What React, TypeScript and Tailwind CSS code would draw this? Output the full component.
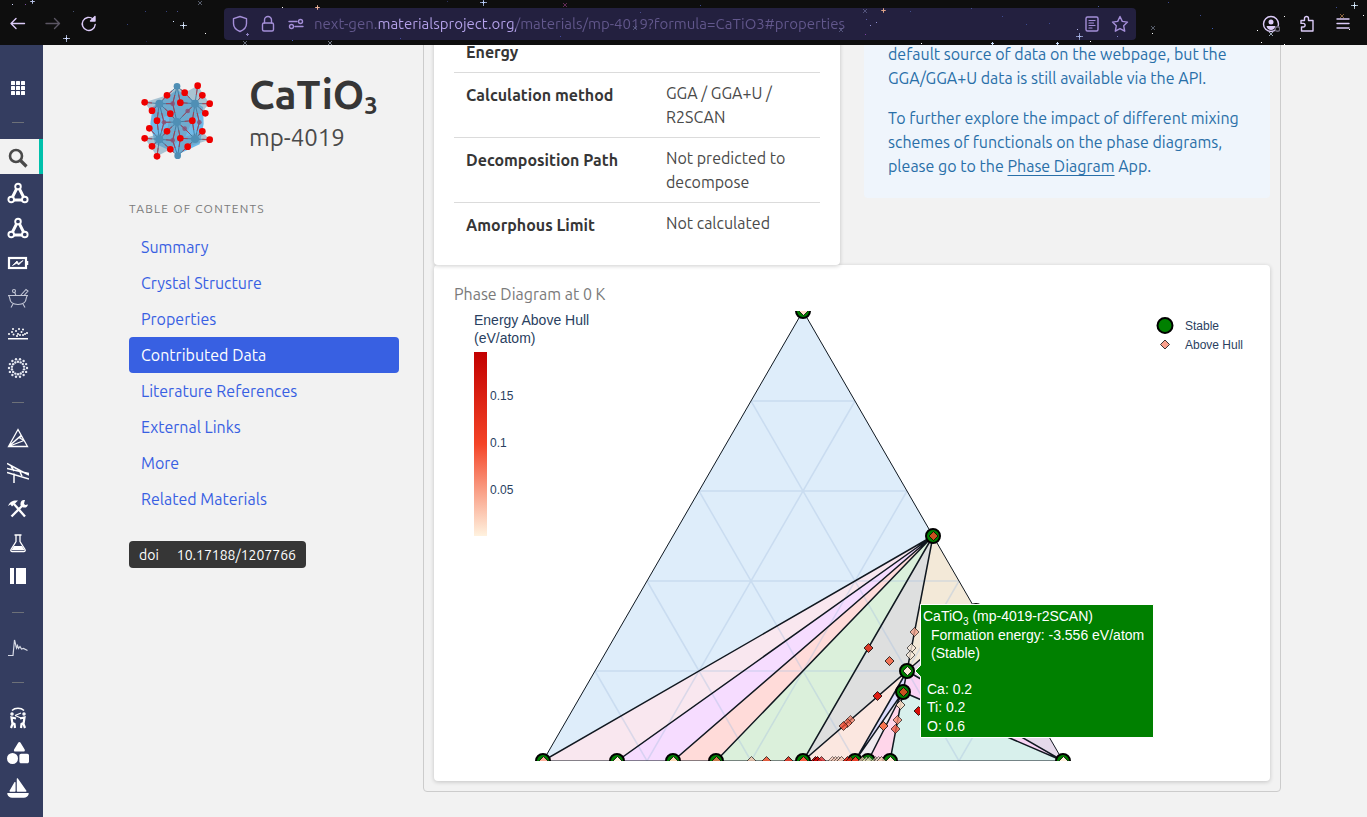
import React from "react";
import { FaShapes, FaSailboat } from "react-icons/fa6";

type Pt = [number, number];

/* ---------- browser toolbar ---------- */

const dots: [number, number, string][] = [
  [12, 4, "#cfd6ff"], [25, 4, "#7c4fa0"], [73, 11, "#44506e"], [127, 24, "#34407a"], [145, 11, "#34407a"],
  [166, 11, "#34407a"], [173, 21, "#d8e8ff"], [177, 11, "#4a4f90"], [205, 33, "#ffffff"], [146, 41, "#20204a"],
  [247, 34, "#5a4a90"], [282, 7, "#ffffff"], [292, 40, "#4a60c0"], [447, 1, "#2a3060"], [700, 5, "#3c4a90"],
  [866, 19, "#5a5aa0"], [876, 22, "#8f8fd0"], [870, 25, "#8f8fd0"], [865, 34, "#7c3fa0"], [910, 11, "#44508e"],
  [971, 8, "#44508e"], [1002, 16, "#3c4a90"], [1026, 24, "#3c4a90"], [1049, 23, "#3c4a90"], [1098, 6, "#4a5aa0"],
  [1090, 41, "#ffffff"], [1077, 29, "#b0b0e0"], [1117, 36, "#8080c0"], [1152, 33, "#ffffff"], [1168, 2, "#3c4a90"],
  [1200, 15, "#3c4a90"], [1212, 28, "#3c5ab0"], [1257, 30, "#ffffff"], [1261, 42, "#ffffff"], [1284, 16, "#ffffff"],
  [1284, 44, "#ffffff"], [1300, 38, "#ffffff"], [1336, 7, "#3c4a90"], [1349, 29, "#ffffff"], [1363, 15, "#ffffff"],
  [921, 43, "#ffffff"], [400, 38, "#4048a0"], [560, 36, "#4048a0"], [640, 12, "#4a4f90"],
];
const pluses: [number, number, number, string][] = [
  [66, 38, 3, "#d0dcff"], [183, 25, 3, "#d8e8ff"], [317, 7, 2, "#f0b59a"], [483, 2, 3, "#b8ccf8"],
  [883, 10, 2, "#e0a58a"], [1079, 36, 3, "#a8b4e8"], [1354, 5, 3, "#d8ecff"], [32, 1, 2, "#b8c4e8"],
  [992, 43, 1, "#c8dcf8"], [1057, 43, 1, "#c8dcf8"], [247, 34, 1, "#8c80c0"],
];
const crosses: [number, number, string][] = [
  [200, 3, "#7a8498"], [245, 43, "#8a94a8"], [330, 43, "#aab4c8"], [865, 11, "#6a6c98"], [1153, 28, "#7a8498"],
  [1342, 16, "#c08850"], [1271, 34, "#d8ecff"], [841, 30, "#6a6c98"], [565, 5, "#8a3878"], [635, 28, "#6a6c98"],
];

function Stars() {
  return (
    <svg className="pointer-events-none absolute left-0 top-0" width="1367" height="45" aria-hidden="true">
      {dots.map(([x, y, c], i) => (
        <rect key={i} x={x} y={y} width="1" height="1" fill={c} />
      ))}
      {pluses.map(([x, y, r, c], i) => (
        <g key={i}>
          <path d={`M${x - r} ${y + 0.5}h${2 * r + 1}M${x + 0.5} ${y - r}v${2 * r + 1}`} stroke={c} opacity="0.75" />
          <path d={`M${x - 1} ${y + 0.5}h3M${x + 0.5} ${y - 1}v3`} stroke={c} />
        </g>
      ))}
      {crosses.map(([x, y, c], i) => (
        <path key={i} d={`M${x - 2} ${y - 2}l4 4m0 -4l-4 4`} stroke={c} strokeWidth="0.8" opacity="0.85" />
      ))}
    </svg>
  );
}

function BarButton({ label, width, children }: { label: string; width: string; children: React.ReactNode }) {
  return (
    <button type="button" aria-label={label} className={`flex h-8 items-center justify-center ${width}`}>
      <svg
        width="18"
        height="18"
        viewBox="0 0 18 18"
        fill="none"
        stroke="currentColor"
        strokeWidth="1.4"
        strokeLinecap="round"
        strokeLinejoin="round"
      >
        {children}
      </svg>
    </button>
  );
}

function Toolbar() {
  return (
    <header className="relative flex h-[45px] shrink-0 items-center bg-[#0e0e0e] pb-px pt-1 text-[#dccbf8]">
      <nav className="flex w-56 shrink-0" aria-label="History">
        <BarButton label="Back" width="w-[35px]">
          <path d="M15.500 8.500H2M7 3.500l-5 5 5 5" />
        </BarButton>
        <span className="flex text-[#5b5663]">
          <BarButton label="Forward" width="w-9">
            <path d="M2 8.500h13.500M10.500 3.500l5 5-5 5" />
          </BarButton>
        </span>
        <BarButton label="Reload" width="w-9">
          <path d="M15.200 9.500A6.500 6.500 0 1 1 13 4" />
          <path d="M15 1.500v4.500h-4.500z" fill="currentColor" />
        </BarButton>
      </nav>
      <div className="flex h-8 min-w-0 flex-1 items-center rounded bg-[#23203f] px-0.5 text-[#a48ed8]">
        <BarButton label="Tracking protection" width="w-7">
          <path d="M9 1.500l6.500 2.200v4.800c0 3.500-2.800 6.500-6.500 8-3.700-1.500-6.500-4.500-6.500-8V3.700z" />
        </BarButton>
        <BarButton label="Site information" width="w-7">
          <rect x="3.500" y="8" width="11" height="8" rx="1.500" />
          <path d="M5.500 8V5a3.500 3.500 0 0 1 7 0v3" />
        </BarButton>
        <BarButton label="Permissions" width="w-7">
          <path d="M2 6.500h8M8 11.500h8" />
          <circle cx="13.500" cy="6.500" r="2" />
          <circle cx="4.500" cy="11.500" r="2" />
        </BarButton>
        <input
          aria-label="Address"
          defaultValue="next-gen.materialsproject.org/materials/mp-4019?formula=CaTiO3#properties"
          className="ml-1 min-w-0 flex-1 bg-[linear-gradient(90deg,#62578c_64px,#b6a3ec_64px,#b6a3ec_202px,#62578c_202px)] bg-clip-text text-[15px] leading-6 text-transparent outline-none"
        />
        <BarButton label="Reader view" width="w-7">
          <rect x="3" y="2" width="12" height="14" rx="1.500" />
          <path d="M6 5.500h6M6 8h4.500M6 10.500h6M6 13h3" strokeWidth="1.200" />
        </BarButton>
        <BarButton label="Bookmark" width="w-7">
          <path d="M9 1.500l2.300 4.900 5.200.7-3.800 3.700 1 5.400L9 13.600l-4.700 2.600 1-5.400L1.500 7.100l5.200-.7z" />
        </BarButton>
      </div>
      <div className="flex w-[231px] shrink-0 justify-end pr-1.5">
        <BarButton label="Account" width="w-9">
          <circle cx="9" cy="9" r="7.500" />
          <circle cx="9" cy="7" r="2.500" fill="currentColor" stroke="none" />
          <path d="M4.500 11h9c-.5 2.500-2.500 4-4.500 4s-4-1.500-4.500-4z" fill="currentColor" stroke="none" />
          <circle cx="15.500" cy="14" r="2.300" stroke="#6d6879" fill="#0e0e0e" />
        </BarButton>
        <BarButton label="Extensions" width="w-9">
          <path d="M3 5.500h3.500V3.500a2 2 0 0 1 4 0v2H15V16H3.500v-4h1.800a1.800 1.800 0 0 0 0-3.600H3z" />
        </BarButton>
        <BarButton label="Menu" width="w-9">
          <path d="M3 4h12M3 8.500h12M3 13h12" />
        </BarButton>
      </div>
      <Stars />
    </header>
  );
}

/* ---------- application rail ---------- */

const svgProps = {
  width: 22,
  height: 22,
  viewBox: "0 0 22 22",
  fill: "none",
  stroke: "currentColor",
  strokeWidth: 1.5,
} as const;

const MoleculeIcon = () => (
  <svg {...svgProps} strokeWidth="1.900">
    <path d="M10 6L5 16M12 6l5 10M7 18h8" strokeWidth="2.900" />
    <circle cx="11" cy="4.500" r="2.800" fill="#343d60" />
    <circle cx="4.200" cy="17.500" r="2.800" fill="#343d60" />
    <circle cx="17.800" cy="17.500" r="2.800" fill="#343d60" />
  </svg>
);

const ringDots: Pt[] = [];
for (let i = 0; i < 14; i++) {
  const a = (i / 14) * Math.PI * 2;
  ringDots.push([11 + Math.cos(a) * 9, 11 + Math.sin(a) * 9], [11 + Math.cos(a + 0.22) * 6.2, 11 + Math.sin(a + 0.22) * 6.2]);
}

const railItems: { label: string; icon: React.ReactNode }[] = [
  {
    label: "Apps",
    icon: (
      <svg {...svgProps} fill="currentColor" stroke="none">
        {[4, 9, 14].map((y) => [4, 9, 14].map((x) => <rect key={`${x}-${y}`} x={x} y={y} width="4" height="4" rx="0.500" />))}
      </svg>
    ),
  },
  { label: "-", icon: null },
  {
    label: "Materials Explorer",
    icon: (
      <svg {...svgProps} strokeWidth="2.600" className="text-[#4a4a4a]">
        <circle cx="9" cy="9" r="6" />
        <path d="M13.500 13.500l6 6" strokeWidth="3.200" />
      </svg>
    ),
  },
  { label: "Molecules Explorer", icon: <MoleculeIcon /> },
  { label: "MOF Explorer", icon: <MoleculeIcon /> },
  {
    label: "Battery Explorer",
    icon: (
      <svg {...svgProps}>
        <rect x="2" y="6" width="17" height="10" strokeWidth="2.200" />
        <path d="M20.500 9v4" />
        <path d="M5.500 13.500l4.500-4.500 1.500 2.500L16 8.500l-4.500 4.500L10 11z" fill="currentColor" strokeWidth="0.800" />
      </svg>
    ),
  },
  {
    label: "Synthesis Explorer",
    icon: (
      <svg {...svgProps} strokeWidth="1.100" stroke="#c3c7d6">
        <path d="M1 8.500h20c-1 0-1.500 1-1.700 2.500C19 15 16 17.500 11 17.500S3 15 2.700 11C2.500 9.500 2 8.500 1 8.500zM6 17l-2 3.500M16 17l2 3.500M13.500 8.500l5.500-6 2 1.500-4 4.500M9 8.500L7.500 5" />
        <circle cx="7" cy="4" r="1.500" />
      </svg>
    ),
  },
  {
    label: "Catalysis Explorer",
    icon: (
      <svg {...svgProps} fill="currentColor" stroke="none">
        <path d="M1 16h20v1.500H1z" />
        {([[5, 10], [2, 12], [6.500, 12.500], [9, 9], [11, 12], [13, 13], [14.500, 10], [12, 7], [16, 7.500], [18, 12], [20, 11], [6, 7], [16, 13], [10, 14]] as Pt[]).map(([x, y]) => (
          <circle key={`${x}-${y}`} cx={x} cy={y} r="1" />
        ))}
      </svg>
    ),
  },
  {
    label: "Crystal Toolkit",
    icon: (
      <svg {...svgProps} fill="#e6e9f2" stroke="none">
        {ringDots.map(([x, y], i) => (
          <circle key={i} cx={x} cy={y} r="1.200" />
        ))}
      </svg>
    ),
  },
  { label: "-", icon: null },
  {
    label: "Phase Diagram",
    icon: (
      <svg {...svgProps} strokeWidth="1.300">
        <path d="M11 2.500l9.500 17h-19zM1.500 19.500L12 10.500l3-1M1.500 19.500l15.500-6M1.500 19.500L14 8.500M12 10.500l5 3" />
      </svg>
    ),
  },
  {
    label: "Pourbaix Diagram",
    icon: (
      <svg {...svgProps} strokeWidth="1.500">
        <path d="M0 1.500l14 7.500 8 4M0 6.500l22 5M0 10.500l22 6.500M7 11.500V21M4 4l3 5M12 8l3 6" />
      </svg>
    ),
  },
  {
    label: "Tools",
    icon: (
      <svg {...svgProps} strokeLinecap="butt">
        <path d="M7 7l11 12.500" strokeWidth="2.300" />
        <path d="M1 9C3 4.500 6 3 11 3.500L7.500 7 5 9.500l-1.500-2z" fill="currentColor" stroke="none" />
        <path d="M4.500 19.500L15.500 8.500" strokeWidth="2.300" />
        <path d="M18 3a3.800 3.800 0 1 0 3 4.500l-3 .5-1-1.500z" fill="currentColor" stroke="none" />
      </svg>
    ),
  },
  {
    label: "Reaction Calculator",
    icon: (
      <svg {...svgProps}>
        <path d="M7.500 3h7M9 3v6.500L4 17.500c-.6 1.200 0 2 1.200 2h11.600c1.200 0 1.800-.8 1.200-2l-5-8V3" strokeWidth="1.300" />
        <path d="M7 14h8l2.500 4H4.500z" fill="currentColor" stroke="none" />
      </svg>
    ),
  },
  {
    label: "Interface Reactions",
    icon: (
      <svg {...svgProps} fill="currentColor" stroke="none">
        <path d="M3 1h4v16H3zM9 1h10v16H9z" />
      </svg>
    ),
  },
  { label: "-", icon: null },
  {
    label: "Spectroscopy",
    icon: (
      <svg {...svgProps} strokeWidth="1.200" stroke="#d8dbe6">
        <path d="M1 18.500h5L7.500 3l2 8 1-2.500 1 3 1.500-2 1.500 2.500 2-.5 4 2" />
      </svg>
    ),
  },
  { label: "-", icon: null },
  {
    label: "Community",
    icon: (
      <svg {...svgProps}>
        <path d="M5 3.500c3-3 9-3 12 0" />
        <path d="M4 21l1.500-4L4.500 10.500l4.500 1M8 21l-.5-4-2-1M18 21l-1.500-4 1-6.500-4.500 1M14 21l.5-4 2-1" strokeWidth="2.200" />
        <path d="M8 8.500l6-2.500M8 8.500l6 2.500" strokeWidth="1.200" />
        <circle cx="5" cy="7" r="1" />
        <circle cx="17" cy="7" r="1" />
      </svg>
    ),
  },
  { label: "Contributions", icon: <FaShapes size={22} /> },
  { label: "Harbor", icon: <FaSailboat size={22} /> },
];

function Rail() {
  return (
    <nav className="w-[43px] shrink-0 bg-[#343d60] pt-6 text-white" aria-label="Applications">
      {railItems.map((item, i) =>
        item.icon === null ? (
          <div key={i} className="flex h-[35px] items-center pl-3 pt-px">
            <hr className="w-3 border-0 border-t border-[#6c7078]" />
          </div>
        ) : (
          <a
            key={i}
            href="#apps"
            aria-label={item.label}
            className={
              item.label === "Materials Explorer"
                ? "flex h-[35px] items-center border-r-4 border-[#00c0ab] bg-[#f2f2f2] pl-[7px] pt-0.5"
                : "flex h-[35px] items-center pl-[7px] pt-0.5"
            }
          >
            {item.icon}
          </a>
        ),
      )}
    </nav>
  );
}

/* ---------- material summary column ---------- */

const reds: Pt[] = [
  [232, 76], [73, 126], [140, 105], [193, 97], [246, 105], [268, 130], [180, 127], [95, 151], [150, 160], [255, 159],
  [110, 181], [216, 181], [87, 204], [246, 213], [140, 213], [180, 234], [73, 234], [268, 238], [95, 258], [150, 267],
  [202, 259], [110, 288],
];
const dimReds: Pt[] = [[202, 152], [193, 205], [157, 130], [157, 240], [237, 186], [131, 186]];
const blues: Pt[] = [[170, 78], [117, 130], [224, 130], [170, 185], [117, 237], [224, 236], [172, 286]];

function Crystal() {
  const bonds: [Pt, Pt][] = [];
  blues.forEach((b) =>
    [...reds, ...dimReds].forEach((r) => {
      if (Math.hypot(b[0] - r[0], b[1] - r[1]) < 58) bonds.push([b, r]);
    }),
  );
  return (
    <svg width="74" height="80" viewBox="62 62 222 240" role="img" aria-label="Crystal structure" className="mt-1.5 shrink-0">
      <path d="M97 140L170 88l78 52 2 50-12 62-64 30-70-32-14-60z" fill="#62b4e8" opacity="0.900" />
      <g fill="#6f9db8" opacity="0.550">
        <path d="M73 126l67-21 40 22-30 33-40 21z" />
        <path d="M170 78l23 19 39-21 14 29 9 54-53 0-62-54z" />
        <path d="M232 76l36 54-52 51-36-54z" />
        <path d="M73 234l67-21 40 21-30 33-40 21z" />
        <path d="M180 234l66-21 22 25-66 21-30 27z" />
        <path d="M140 213l10-53 66 21-23 53z" />
        <path d="M150 160l30-33 36 54-36 53-40-21z" />
      </g>
      <g strokeWidth="3">
        {bonds.map(([b, r], i) => (
          <g key={i} opacity="0.850">
            <path d={`M${b[0]} ${b[1]}L${r[0]} ${r[1]}`} stroke="#3c7499" />
            <path d={`M${(b[0] + r[0]) / 2} ${(b[1] + r[1]) / 2}L${r[0]} ${r[1]}`} stroke="#b02c3c" />
          </g>
        ))}
      </g>
      {dimReds.map(([x, y], i) => (
        <circle key={i} cx={x} cy={y} r="7" fill="#8c4c70" opacity="0.800" />
      ))}
      {blues.map(([x, y], i) => (
        <circle key={i} cx={x} cy={y} r={i === 0 || i === 6 ? 10 : 12} fill="#4f8fb5" />
      ))}
      {reds.map(([x, y], i) => (
        <circle key={i} cx={x} cy={y} r="10" fill="#ee0000" />
      ))}
    </svg>
  );
}

const contents = [
  "Summary",
  "Crystal Structure",
  "Properties",
  "Contributed Data",
  "Literature References",
  "External Links",
  "More",
  "Related Materials",
];

function Summary() {
  return (
    <aside className="w-[270px] shrink-0 pt-[30px]">
      <div className="flex items-start gap-[34px] pl-3">
        <Crystal />
        <div>
          <h1 className="text-[40px] font-semibold leading-10 text-[#363636]">
            CaTiO<sub className="bottom-[-5px] text-2xl leading-none">3</sub>
          </h1>
          <p className="mt-[5px] text-2xl leading-9 text-[#4a4a4a]">mp-4019</p>
        </div>
      </div>
      <nav className="mt-10" aria-label="Table of contents">
        <p className="mb-3 text-xs uppercase leading-4 tracking-widest text-[#7a7a7a]">Table of Contents</p>
        <ul>
          {contents.map((name) => (
            <li key={name}>
              <a
                href="#properties"
                className={
                  name === "Contributed Data"
                    ? "block rounded bg-[#3860e2] px-3 py-1.5 leading-6 text-white"
                    : "block rounded px-3 py-1.5 leading-6 text-[#3860e2]"
                }
              >
                {name}
              </a>
            </li>
          ))}
        </ul>
      </nav>
      <a href="#doi" className="mt-6 inline-flex h-[27px] items-center gap-[18px] rounded bg-[#363636] px-2.5 pt-px text-sm text-white">
        <span>doi</span>
        <span>10.17188/1207766</span>
      </a>
    </aside>
  );
}

/* ---------- phase diagram ---------- */

const regions: [string, string][] = [
  ["803,311 543,761 933,536", "#deedfa"],
  ["543,761 617,761 933,536", "#f9e7ef"],
  ["617,761 673,761 933,536", "#f6dcff"],
  ["673,761 716,761 933,536", "#ffdbd9"],
  ["716,761 803,761 933,536", "#dbf0db"],
  ["803,761 907,671 933,536", "#dedfdf"],
  ["933,536 907,671 976,611", "#f3e9d8"],
  ["803,761 855,761 907,671", "#fbe7e0"],
  ["855,761 903,692 907,671", "#dcdcfc"],
  ["855,761 868,761 903,692", "#efebef"],
  ["868,761 890,761 903,692", "#ffd6ea"],
  ["890,761 1063,761 903,692", "#d8f0ec"],
  ["903,692 907,671 1063,761", "#fad4f5"],
  ["907,671 976,611 1063,761", "#e5d9ea"],
];
const gridLines =
  "M751 401H855M699 491H907M647 581H959M595 671H1011M751 401L959 761M699 491L855 761M647 581L751 761M595 671L647 761M855 401L647 761M907 491L751 761M959 581L855 761M1011 671L959 761";
const stable: Pt[] = [
  [803, 311], [933, 536], [976, 611], [907, 671], [903, 692], [543, 761], [617, 761], [673, 761], [716, 761],
  [803, 761], [855, 761], [868, 761], [890, 761], [1063, 761],
];
const entries: [number, number, string, number][] = [
  [803, 311, "#fde0cc", 1], [933, 536, "#c9501f", 1], [907, 671, "#fde8da", 1], [903, 692, "#c8521f", 1],
  [914, 632, "#f0a08a", 0.8], [911, 648, "#f8e8d8", 0.8], [910, 655, "#f8e8d8", 0.8], [868, 648, "#d93b27", 1],
  [889, 661, "#f07458", 1], [877, 696, "#dd1c12", 1], [850, 720, "#e87058", 0.7], [847, 723, "#ee5a40", 0.7],
  [843, 726, "#ee4a30", 0.8], [900, 705, "#f8dcc4", 0.9], [897, 720, "#f58a70", 0.8], [895, 729, "#ee5a44", 0.8],
  [883, 726, "#f77450", 1], [918, 711, "#d50e08", 1], [543, 761, "#ffb09c", 1], [617, 761, "#fff0dc", 1],
  [673, 761, "#fcd8b4", 1], [716, 761, "#cd7c4c", 1], [751, 761, "#efc0a8", 0.8], [766, 761, "#ee5a38", 0.9],
  [788, 761, "#d94130", 1], [803, 761, "#f75c40", 1], [815, 761, "#d01010", 1], [817, 761, "#c80808", 1],
  [821, 761, "#d83030", 0.8], [832, 761, "#eec0ac", 0.6], [835, 761, "#eec0ac", 0.6], [838, 761, "#ecc8b8", 0.6],
  [841, 761, "#f4c8b4", 0.8], [847, 761, "#dd2010", 0.9], [850, 761, "#dd2818", 0.7], [855, 761, "#ee4028", 1],
  [862, 761, "#f8d8b8", 0.7], [866, 761, "#f8e0c8", 0.6], [869, 761, "#f8e0c8", 0.6], [875, 761, "#e8ccb8", 0.6],
  [878, 761, "#e8d4c0", 0.6], [881, 761, "#f4c8b0", 0.8], [890, 761, "#ffe8d4", 1], [1063, 761, "#fff0dc", 1],
];
const ink = "#2a3f5f";

function PhaseDiagram() {
  return (
    <svg
      viewBox="454 311 796 450"
      className="block h-auto w-full font-['Liberation_Sans',Arial,sans-serif]"
      role="img"
      aria-label="Ternary phase diagram"
    >
      <defs>
        <linearGradient id="hull" x1="0" y1="0" x2="0" y2="1">
          <stop offset="0" stopColor="#c20000" />
          <stop offset="0.500" stopColor="#f44427" />
          <stop offset="0.750" stopColor="#f99d84" />
          <stop offset="1" stopColor="#fff2df" />
        </linearGradient>
      </defs>
      {regions.map(([points, fill]) => (
        <polygon key={points} points={points} fill={fill} stroke={fill} strokeWidth="0.500" />
      ))}
      <path d={gridLines} stroke="#a8c0e0" strokeOpacity="0.380" strokeWidth="1.500" fill="none" />
      <g stroke="#101820" fill="none">
        <path d="M543 761L803 311L1063 761Z" strokeWidth="1" />
        <path
          d="M933 536L543 761M933 536L617 761M933 536L673 761M933 536L716 761M933 536L803 761M933 536L907 671L803 761M907 671L976 611M855 761L907 671L903 692L855 761M903 692L868 761M903 692L890 761M903 692L1063 761L907 671"
          strokeWidth="1.500"
        />
      </g>
      {stable.map(([x, y], i) => (
        <circle key={i} cx={x} cy={y} r="7" fill="#008000" stroke="#000" strokeWidth="2" />
      ))}
      {entries.map(([x, y, fill, opacity], i) => (
        <path
          key={i}
          d={`M${x + 0.5} ${y - 4.5}l4.500 4.500-4.500 4.500-4.500-4.500z`}
          fill={fill}
          fillOpacity={opacity}
          stroke="#000"
          strokeOpacity={opacity * 0.85}
          strokeWidth="0.900"
        />
      ))}
      <g fill={ink} fontSize="14">
        <text x="474" y="325">Energy Above Hull</text>
        <text x="474" y="343">(eV/atom)</text>
      </g>
      <rect x="474" y="352" width="13" height="184" fill="url(#hull)" />
      <g fill={ink} fontSize="12">
        <text x="490" y="400">0.15</text>
        <text x="490" y="447">0.1</text>
        <text x="490" y="494">0.05</text>
        <text x="1185" y="330">Stable</text>
        <text x="1185" y="349">Above Hull</text>
      </g>
      <circle cx="1165" cy="325.500" r="7.500" fill="#008000" stroke="#000" strokeWidth="2" />
      <path d="M1165 340l4.500 4.500-4.500 4.500-4.500-4.500z" fill="#f9a08c" stroke="#222" strokeWidth="0.900" />
      <path d="M915 671l5.500-5.500V604.500h233v133h-233v-61z" fill="#008000" stroke="#fff" strokeWidth="1" />
      <g fill="#fff" fontSize="14">
        <text x="923" y="621">
          CaTiO<tspan fontSize="10" dy="4">3</tspan>
          <tspan dy="-4"> (mp-4019-r2SCAN)</tspan>
        </text>
        <text x="931" y="640">Formation energy: -3.556 eV/atom</text>
        <text x="931" y="658">(Stable)</text>
        <text x="927" y="694">Ca: 0.2</text>
        <text x="927" y="712">Ti: 0.2</text>
        <text x="927" y="731">O: 0.6</text>
      </g>
    </svg>
  );
}

/* ---------- main column ---------- */

const rows: [string, string][] = [
  ["Energy", ""],
  ["Calculation method", "GGA / GGA+U / R2SCAN"],
  ["Decomposition Path", "Not predicted to decompose"],
  ["Amorphous Limit", "Not calculated"],
];

const card = "rounded bg-white shadow-[0_1px_4px_rgba(10,10,10,0.2)]";

function Details() {
  return (
    <section className="-mt-[46px] min-w-0 flex-1 self-start rounded border border-[#cccccc] p-2.5">
      <div className="grid grid-cols-2 items-start gap-6">
        <div className={`p-5 ${card}`}>
          <table className="w-full text-left">
            <tbody>
              {rows.map(([name, value]) => (
                <tr key={name} className="border-b border-[#dbdbdb] last:border-b-0">
                  <th scope="row" className="w-[200px] px-3 py-2 align-top font-semibold leading-6 text-[#363636]">
                    <span className="block pt-0.5">{name}</span>
                  </th>
                  <td className="px-3 py-2 align-top leading-6 text-[#4a4a4a]">{value}</td>
                </tr>
              ))}
            </tbody>
          </table>
        </div>
        <div className="rounded bg-[#eff5fc] px-6 pb-5 pt-8 leading-6 text-[#296fa8]">
          <p>default source of data on the webpage, but the GGA/GGA+U data is still available via the API.</p>
          <p className="mt-4">
            To further explore the impact of different mixing schemes of functionals on the phase diagrams, please go to the{" "}
            <a href="#phase-diagram" className="underline underline-offset-3">
              Phase Diagram
            </a>{" "}
            App.
          </p>
        </div>
      </div>
      <div className={`px-5 pb-5 pt-[17px] ${card}`}>
        <h2 className="mb-[5px] leading-6 text-[#7a7a7a]">Phase Diagram at 0 K</h2>
        <PhaseDiagram />
      </div>
    </section>
  );
}

export default function App() {
  return (
    <div className="flex h-screen flex-col overflow-hidden bg-[#f2f2f2] font-[Ubuntu,'Noto_Sans',sans-serif] text-base">
      <Toolbar />
      <div className="flex min-h-0 flex-1 overflow-hidden">
        <Rail />
        <main className="min-w-0 flex-1">
          <div className="mx-auto flex max-w-6xl gap-6">
            <Summary />
            <Details />
          </div>
        </main>
      </div>
    </div>
  );
}
